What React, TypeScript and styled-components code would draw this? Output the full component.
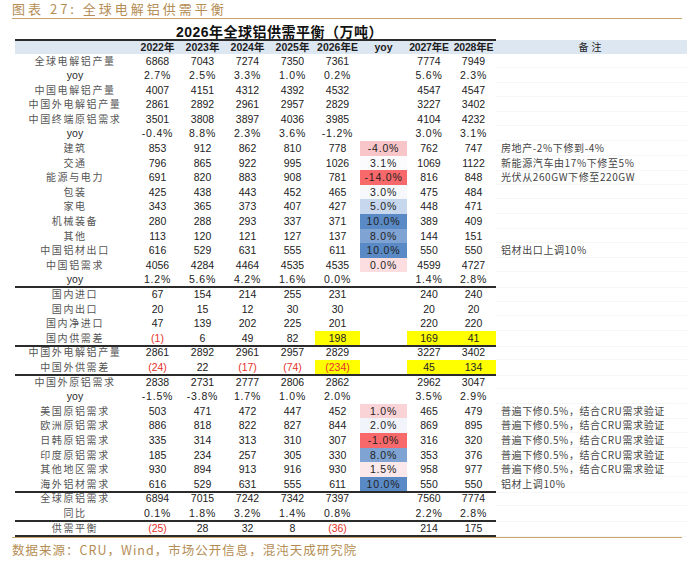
import styled, { createGlobalStyle } from "styled-components"

const GlobalStyle = createGlobalStyle`
  html, body {
    margin: 0;
    padding: 0;
    background: #fff;
  }
  body {
    font-family: "Liberation Sans", "Noto Sans CJK SC", sans-serif;
  }
`

const CJK = `"Noto Sans CJK SC", "Liberation Sans", sans-serif`
const NUM = `"Liberation Sans", "Noto Sans CJK SC", sans-serif`
const COLS = `120px repeat(5, 45px) 47px 44px 45px 191px`

const Page = styled.div`
  width: 695px;
  height: 561px;
  box-sizing: border-box;
  padding: 1px 13px 0 12px;
`

const Caption = styled.div`
  height: 17px;
  line-height: 15px;
  font-family: ${CJK};
  font-size: 13px;
  letter-spacing: 3px;
  color: #b48d55;
  border-bottom: 1.5px solid #c9a46e;
`

const Table = styled.div`
  margin: 6.5px 0 0 3px;
  width: 672px;
`

const Row = styled.div<{ $h?: number; $bg?: string }>`
  display: grid;
  grid-template-columns: ${COLS};
  height: ${({ $h = 14.6 }) => $h}px;
  background: ${({ $bg = "transparent" }) => $bg};
`

const TitleCell = styled.div`
  grid-column: 1 / 10;
  box-sizing: border-box;
  border-bottom: 2px solid #2b2b2b;
  text-align: center;
  font-family: ${NUM};
  font-weight: 700;
  font-size: 14px;
  line-height: 13px;
  letter-spacing: 0.5px;
  color: #111;
  padding-left: 48px;
`

const HeadCell = styled.div<{ $tight?: boolean }>`
  text-align: center;
  font-family: ${NUM};
  font-weight: 700;
  font-size: 10.5px;
  line-height: 14px;
  color: #1e1e1e;
  white-space: nowrap;
  letter-spacing: ${({ $tight }) => ($tight ? "-0.2px" : "0")};
`

const NoteHead = styled.span`
  font-family: ${CJK};
  font-weight: 400;
  font-size: 10px;
  letter-spacing: 3px;
`

const Cell = styled.div<{ $bg?: string; $red?: boolean; $sep?: number; $pct?: boolean }>`
  box-sizing: border-box;
  text-align: center;
  font-family: ${NUM};
  font-size: 10.5px;
  line-height: 14px;
  white-space: nowrap;
  letter-spacing: ${({ $pct }) => ($pct ? "0.8px" : "0")};
  color: ${({ $red }) => ($red ? "#e4312b" : "#222")};
  background: ${({ $bg = "transparent" }) => $bg};
  border-bottom: ${({ $sep = 0 }) =>
    $sep ? `${$sep}px solid #2b2b2b` : "none"};
`

const LabelCell = styled(Cell)<{ $latin?: boolean }>`
  font-family: ${({ $latin }) => ($latin ? NUM : CJK)};
  font-size: ${({ $latin }) => ($latin ? "10.5px" : "10px")};
  letter-spacing: ${({ $latin }) => ($latin ? "0" : "1.6px")};
  color: ${({ $latin }) => ($latin ? "#2a2a2a" : "#555")};
`

const NoteCell = styled.div`
  box-sizing: border-box;
  padding-left: 5px;
  font-family: ${CJK};
  font-size: 10px;
  line-height: 14px;
  letter-spacing: 0.6px;
  color: #444;
  white-space: nowrap;
  border-bottom: 1px solid #f6f6f6;
`

const FooterLine = styled.div`
  margin-top: 2px;
  border-top: 1.5px solid #c9a46e;
`

const Source = styled.div`
  padding-top: 4px;
  font-family: ${CJK};
  font-size: 12.5px;
  line-height: 15px;
  letter-spacing: 1px;
  color: #b48d55;
`

type Yoy = [string, string]

interface DataRow {
  label: string
  v: string[]
  e: string[]
  yoy?: Yoy
  note?: string
  sep?: number
  hl?: boolean
}

const CRU_NOTE = "普遍下修0.5%，结合CRU需求验证"
const RED = "#f8696b"
const BLUE = "#5a8ac6"
const MID_BLUE = "#7fa3d3"

const rows: DataRow[] = [
  { label: "全球电解铝产量", v: ["6868", "7043", "7274", "7350", "7361"], e: ["7774", "7949"] },
  { label: "yoy", v: ["2.7%", "2.5%", "3.3%", "1.0%", "0.2%"], e: ["5.6%", "2.3%"] },
  { label: "中国电解铝产量", v: ["4007", "4151", "4312", "4392", "4532"], e: ["4547", "4547"] },
  { label: "中国外电解铝产量", v: ["2861", "2892", "2961", "2957", "2829"], e: ["3227", "3402"] },
  { label: "中国终端原铝需求", v: ["3501", "3808", "3897", "4036", "3985"], e: ["4104", "4232"] },
  { label: "yoy", v: ["-0.4%", "8.8%", "2.3%", "3.6%", "-1.2%"], e: ["3.0%", "3.1%"] },
  { label: "建筑", v: ["853", "912", "862", "810", "778"], yoy: ["-4.0%", "#f8c5c8"], e: ["762", "747"], note: "房地产-2%下修到-4%" },
  { label: "交通", v: ["796", "865", "922", "995", "1026"], yoy: ["3.1%", "#fbfbfe"], e: ["1069", "1122"], note: "新能源汽车由17%下修至5%" },
  { label: "能源与电力", v: ["691", "820", "883", "908", "781"], yoy: ["-14.0%", RED], e: ["816", "848"], note: "光伏从260GW下修至220GW" },
  { label: "包装", v: ["425", "438", "443", "452", "465"], yoy: ["3.0%", "#f6f8fc"], e: ["475", "484"] },
  { label: "家电", v: ["343", "365", "373", "407", "427"], yoy: ["5.0%", "#c7d7ee"], e: ["448", "471"] },
  { label: "机械装备", v: ["280", "288", "293", "337", "371"], yoy: ["10.0%", BLUE], e: ["389", "409"] },
  { label: "其他", v: ["113", "120", "121", "127", "137"], yoy: ["8.0%", MID_BLUE], e: ["144", "151"] },
  { label: "中国铝材出口", v: ["616", "529", "631", "555", "611"], yoy: ["10.0%", BLUE], e: ["550", "550"], note: "铝材出口上调10%" },
  { label: "中国铝需求", v: ["4056", "4284", "4464", "4535", "4535"], yoy: ["0.0%", "#fcdee1"], e: ["4599", "4727"] },
  { label: "yoy", v: ["1.2%", "5.6%", "4.2%", "1.6%", "0.0%"], e: ["1.4%", "2.8%"], sep: 2 },
  { label: "国内进口", v: ["67", "154", "214", "255", "231"], e: ["240", "240"] },
  { label: "国内出口", v: ["20", "15", "12", "30", "30"], e: ["20", "20"] },
  { label: "国内净进口", v: ["47", "139", "202", "225", "201"], e: ["220", "220"] },
  { label: "国内供需差", v: ["(1)", "6", "49", "82", "198"], e: ["169", "41"], hl: true, sep: 2 },
  { label: "中国外电解铝产量", v: ["2861", "2892", "2961", "2957", "2829"], e: ["3227", "3402"] },
  { label: "中国外供需差", v: ["(24)", "22", "(17)", "(74)", "(234)"], e: ["45", "134"], hl: true, sep: 2 },
  { label: "中国外原铝需求", v: ["2838", "2731", "2777", "2806", "2862"], e: ["2962", "3047"] },
  { label: "yoy", v: ["-1.5%", "-3.8%", "1.7%", "1.0%", "2.0%"], e: ["3.5%", "2.9%"] },
  { label: "美国原铝需求", v: ["503", "471", "472", "447", "452"], yoy: ["1.0%", "#fad3d6"], e: ["465", "479"], note: CRU_NOTE },
  { label: "欧洲原铝需求", v: ["886", "818", "822", "827", "844"], yoy: ["2.0%", "#f1f4fa"], e: ["869", "895"], note: CRU_NOTE },
  { label: "日韩原铝需求", v: ["335", "314", "313", "310", "307"], yoy: ["-1.0%", RED], e: ["316", "320"], note: CRU_NOTE },
  { label: "印度原铝需求", v: ["185", "234", "257", "305", "330"], yoy: ["8.0%", MID_BLUE], e: ["353", "376"], note: CRU_NOTE },
  { label: "其他地区需求", v: ["930", "894", "913", "916", "930"], yoy: ["1.5%", "#fbe8ea"], e: ["958", "977"], note: CRU_NOTE },
  { label: "海外铝材需求", v: ["616", "529", "631", "555", "611"], yoy: ["10.0%", BLUE], e: ["550", "550"], note: "铝材上调10%", sep: 2 },
  { label: "全球原铝需求", v: ["6894", "7015", "7242", "7342", "7397"], e: ["7560", "7774"] },
  { label: "同比", v: ["0.1%", "1.8%", "3.2%", "1.4%", "0.8%"], e: ["2.2%", "2.8%"], sep: 2 },
  { label: "供需平衡", v: ["(25)", "28", "32", "8", "(36)"], e: ["214", "175"], sep: 2 },
]

const headers = ["2022年", "2023年", "2024年", "2025年", "2026年E", "yoy", "2027年E", "2028年E"]
const YELLOW = "#ffff00"
const isNeg = (s: string) => s.startsWith("(")
const isPct = (s: string) => s.endsWith("%")

export default function App() {
  return (
    <Page>
      <GlobalStyle />
      <Caption>图表 27: 全球电解铝供需平衡</Caption>
      <Table>
        <Row $h={14}>
          <TitleCell>2026年全球铝供需平衡（万吨）</TitleCell>
        </Row>
        <Row $h={14} $bg="#dde7f2">
          <HeadCell />
          {headers.map((h) => (
            <HeadCell key={h} $tight={h.endsWith("E") && h !== "2026年E"}>
              {h}
            </HeadCell>
          ))}
          <HeadCell>
            <NoteHead>备注</NoteHead>
          </HeadCell>
        </Row>
        {rows.map((r, i) => (
          <Row key={i}>
            <LabelCell $latin={!/[^\x00-\x7f]/.test(r.label)} $sep={r.sep}>
              {r.label}
            </LabelCell>
            {r.v.map((x, j) => (
              <Cell
                key={j}
                $sep={r.sep}
                $pct={isPct(x)}
                $red={isNeg(x)}
                $bg={r.hl && j === 4 ? YELLOW : undefined}
              >
                {x}
              </Cell>
            ))}
            <Cell $sep={r.sep} $pct $bg={r.yoy?.[1]}>
              {r.yoy?.[0] ?? ""}
            </Cell>
            {r.e.map((x, j) => (
              <Cell key={j} $sep={r.sep} $pct={isPct(x)} $bg={r.hl ? YELLOW : undefined}>
                {x}
              </Cell>
            ))}
            <NoteCell>{r.note ?? ""}</NoteCell>
          </Row>
        ))}
      </Table>
      <FooterLine />
      <Source>数据来源：CRU，Wind，市场公开信息，混沌天成研究院</Source>
    </Page>
  )
}
